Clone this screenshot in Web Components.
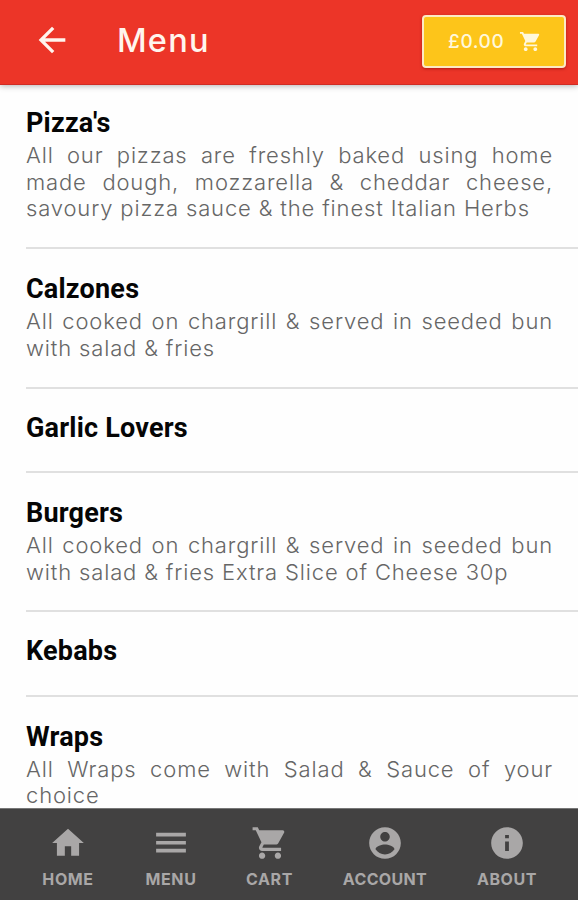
<!DOCTYPE html>
<html lang="en">
<head>
<meta charset="utf-8">
<title>Menu</title>
<style>
  html, body {
    margin: 0;
    height: 100%;
    overflow: hidden;
    background: #fefefe;
    font-family: Inter, sans-serif;
  }
</style>
</head>
<body>
<menu-app></menu-app>
<script>
const ICONS = {
  back: 'M20 11H7.83l5.59-5.59L12 4l-8 8 8 8 1.41-1.41L7.83 13H20v-2z',
  cart: 'M7 18c-1.1 0-1.99.9-1.99 2S5.9 22 7 22s2-.9 2-2-.9-2-2-2zM1 2v2h2l3.6 7.59-1.35 2.45c-.16.28-.25.61-.25.96 0 1.1.9 2 2 2h12v-2H7.42c-.14 0-.25-.11-.25-.25l.03-.12.9-1.63h7.45c.75 0 1.41-.41 1.75-1.03l3.58-6.49A1 1 0 0 0 20 4H5.21l-.94-2H1zm16 16c-1.1 0-1.99.9-1.99 2s.89 2 1.99 2 2-.9 2-2-.9-2-2-2z',
  home: 'M10 20v-6h4v6h5v-8h3L12 3 2 12h3v8z',
  menu: 'M2.6 18h18.8v-2.3H2.6V18zm0-5h18.8v-2.3H2.6V13zm0-7.4v2.3h18.8V5.6H2.6z',
  account: 'M12 2C6.48 2 2 6.48 2 12s4.48 10 10 10 10-4.48 10-10S17.52 2 12 2zm0 3c1.66 0 3 1.34 3 3s-1.34 3-3 3-3-1.34-3-3 1.34-3 3-3zm0 14.2c-2.5 0-4.71-1.28-6-3.22.03-1.99 4-3.08 6-3.08 1.99 0 5.97 1.09 6 3.08-1.29 1.94-3.5 3.22-6 3.22z',
  about: 'M12 2C6.48 2 2 6.48 2 12s4.48 10 10 10 10-4.48 10-10S17.52 2 12 2zm1.2 15h-2.4v-6h2.4v6zm0-8h-2.4V7h2.4v2z'
};

class AppIcon extends HTMLElement {
  connectedCallback() {
    this.attachShadow({ mode: 'open' });
    this.shadowRoot.innerHTML = `
      <style>
        :host { display: block; width: var(--icon-size, 38px); height: var(--icon-size, 38px); flex: none; }
        svg { display: block; width: 100%; height: 100%; fill: currentColor; }
      </style>
      <svg viewBox="0 0 24 24"><path d="${ICONS[this.getAttribute('name')]}"/></svg>
    `;
  }
}
customElements.define('app-icon', AppIcon);

class CartButton extends HTMLElement {
  connectedCallback() {
    this.attachShadow({ mode: 'open' });
    this.shadowRoot.innerHTML = `
      <style>
        :host { display: block; }
        button {
          display: flex;
          align-items: center;
          box-sizing: border-box;
          width: 144px;
          height: 53px;
          padding: 0 0 0 24px;
          border: 2px solid #fde9c4;
          border-radius: 4px;
          background: #fdc51a;
          box-shadow: 0 1px 3px rgba(120, 0, 0, 0.5);
          color: #fff8dc;
          font: 500 19px Inter, sans-serif;
          letter-spacing: 0.6px;
        }
        span { width: 71px; text-align: left; white-space: nowrap; }
        app-icon { --icon-size: 23px; }
      </style>
      <button><span><slot></slot></span><app-icon name="cart"></app-icon></button>
    `;
  }
}
customElements.define('cart-button', CartButton);

class AppHeader extends HTMLElement {
  connectedCallback() {
    this.attachShadow({ mode: 'open' });
    this.shadowRoot.innerHTML = `
      <style>
        :host {
          display: flex;
          align-items: center;
          box-sizing: border-box;
          height: 85px;
          padding: 0 12px 2px 32px;
          background: #ec3528;
          border-bottom: 1px solid #d02c24;
          box-shadow: 0 1px 6px rgba(0, 0, 0, 0.3);
          color: #fff5ee;
          z-index: 1;
          flex: none;
        }
        app-icon { --icon-size: 40px; margin-top: -3px; }
        h1 {
          flex: 1;
          margin: -1px 0 0 45px;
          font: 500 32.5px Inter, sans-serif;
          letter-spacing: 1.2px;
        }
      </style>
      <app-icon name="back"></app-icon>
      <h1><slot></slot></h1>
      <cart-button>£0.00</cart-button>
    `;
  }
}
customElements.define('app-header', AppHeader);

class MenuCategory extends HTMLElement {
  connectedCallback() {
    const plain = !this.textContent.trim();
    this.attachShadow({ mode: 'open' });
    this.shadowRoot.innerHTML = `
      <style>
        :host {
          display: block;
          margin-left: 26px;
          padding: ${plain ? '24px 25px 28.4px 0' : '25px 25px 25px 0'};
          border-bottom: 2px solid #e0e0e0;
        }
        h2 {
          margin: 0;
          font: 700 27px/30px Roboto, sans-serif;
          letter-spacing: 0.2px;
          color: #050505;
        }
        p {
          margin: 4px 0 0;
          font: 300 22px/26.7px Inter, sans-serif;
          letter-spacing: 0.85px;
          color: #666;
          text-align: justify;
        }
      </style>
      <h2>${this.getAttribute('heading')}</h2>
      ${plain ? '' : '<p><slot></slot></p>'}
    `;
  }
}
customElements.define('menu-category', MenuCategory);

class TabItem extends HTMLElement {
  connectedCallback() {
    this.attachShadow({ mode: 'open' });
    this.shadowRoot.innerHTML = `
      <style>
        :host {
          display: flex;
          flex-direction: column;
          align-items: center;
          color: #a9a7a7;
          font: 700 16px/20px Inter, sans-serif;
        }
        span { margin-top: 7px; white-space: nowrap; letter-spacing: 0.6px; }
        :host([icon="account"]) span { letter-spacing: 0.35px; }
      </style>
      <app-icon name="${this.getAttribute('icon')}"></app-icon>
      <span><slot></slot></span>
    `;
  }
}
customElements.define('tab-item', TabItem);

class TabBar extends HTMLElement {
  connectedCallback() {
    this.attachShadow({ mode: 'open' });
    this.shadowRoot.innerHTML = `
      <style>
        :host {
          display: grid;
          grid-template-columns: 102px 104px 93px 138px 106px;
          box-sizing: border-box;
          height: 92px;
          padding: 15px 17px 0;
          background: #424141;
          border-top: 1px solid #777;
          flex: none;
          z-index: 1;
        }
      </style>
      <slot></slot>
    `;
  }
}
customElements.define('tab-bar', TabBar);

class MenuApp extends HTMLElement {
  connectedCallback() {
    this.attachShadow({ mode: 'open' });
    this.shadowRoot.innerHTML = `
      <style>
        :host { display: flex; flex-direction: column; height: 100vh; }
        main { flex: 1; min-height: 0; overflow: hidden; }
        menu-category:first-child { padding-top: 23px; }
      </style>
      <app-header>Menu</app-header>
      <main>
        <menu-category heading="Pizza's">All our pizzas are freshly baked using home made dough, mozzarella &amp; cheddar cheese, savoury pizza sauce &amp; the finest Italian Herbs</menu-category>
        <menu-category heading="Calzones">All cooked on chargrill &amp; served in seeded bun with salad &amp; fries</menu-category>
        <menu-category heading="Garlic Lovers"></menu-category>
        <menu-category heading="Burgers">All cooked on chargrill &amp; served in seeded bun with salad &amp; fries Extra Slice of Cheese 30p</menu-category>
        <menu-category heading="Kebabs"></menu-category>
        <menu-category heading="Wraps">All Wraps come with Salad &amp; Sauce of your choice</menu-category>
      </main>
      <tab-bar>
        <tab-item icon="home">HOME</tab-item>
        <tab-item icon="menu">MENU</tab-item>
        <tab-item icon="cart">CART</tab-item>
        <tab-item icon="account">ACCOUNT</tab-item>
        <tab-item icon="about">ABOUT</tab-item>
      </tab-bar>
    `;
  }
}
customElements.define('menu-app', MenuApp);
</script>
</body>
</html>
